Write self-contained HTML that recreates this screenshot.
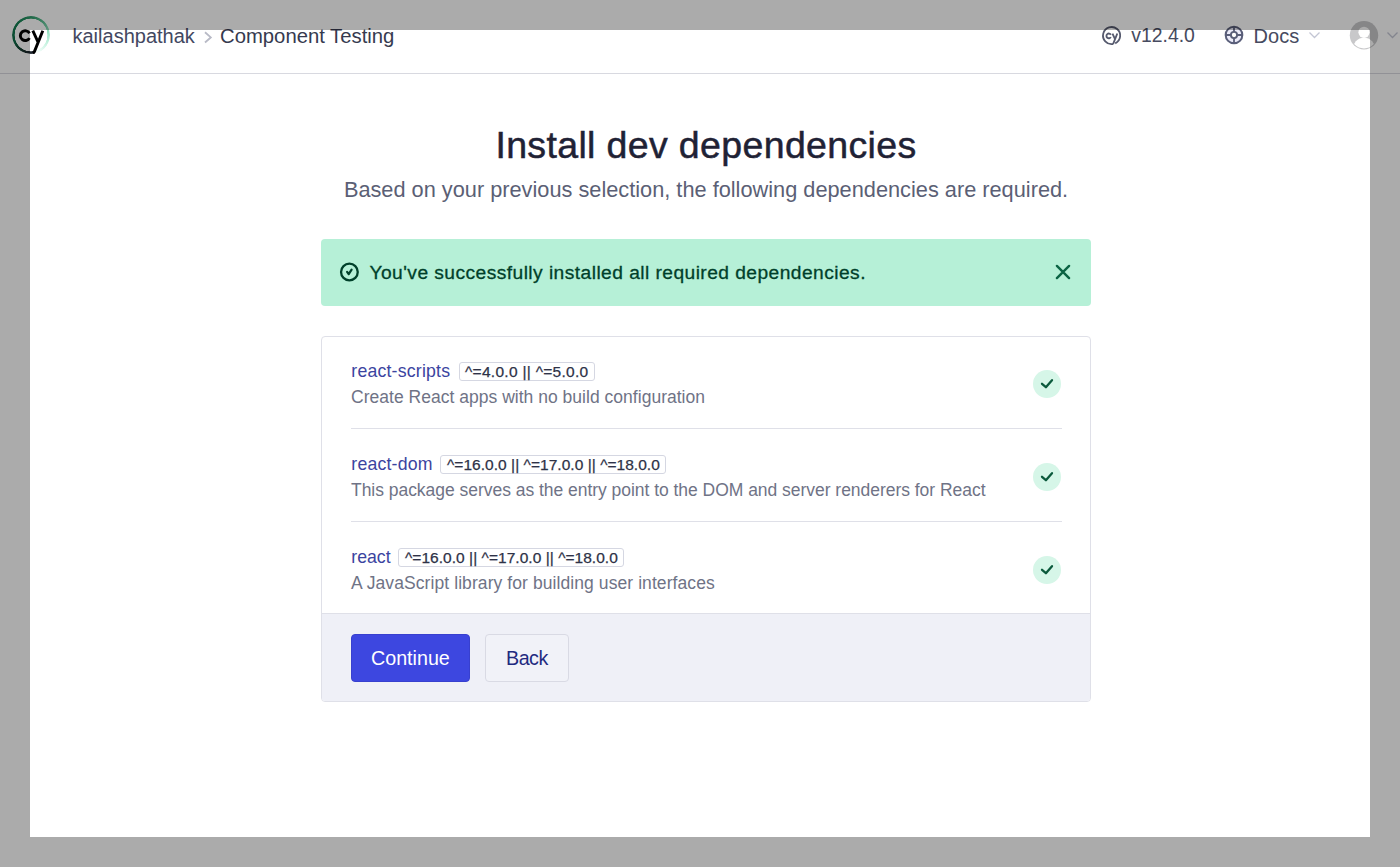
<!DOCTYPE html>
<html><head><meta charset="utf-8">
<style>
*{margin:0;padding:0;box-sizing:border-box}
html,body{width:1400px;height:867px;overflow:hidden;background:#fff;font-family:"Liberation Sans",sans-serif}
.a{position:absolute;white-space:nowrap;line-height:1}
#hdr{position:absolute;left:0;top:0;width:1400px;height:74px;border-bottom:1px solid #d8d9e0;background:#fff}
.ov{position:absolute;background:rgba(0,0,0,0.33)}
</style></head><body>
<div id="hdr"></div>

<!-- header left -->
<div class="a" style="left:12px;top:15.5px;width:38.4px;height:38.4px;border-radius:50%;background:conic-gradient(from 168deg,#1b1e2e 0%,#1b302c 10%,#0f6c48 22%,#178255 40%,#35a070 55%,#6fcda3 68%,#a3e7cb 78%,#d8f7ea 90%,rgba(255,255,255,0) 100%);-webkit-mask:radial-gradient(circle,transparent 16.2px,#000 16.6px,#000 19.2px,transparent 19.6px);mask:radial-gradient(circle,transparent 16.2px,#000 16.6px,#000 19.2px,transparent 19.6px)"></div>
<svg class="a" style="left:7.2px;top:10.7px" width="48" height="48" viewBox="0 0 48 48">
  <path d="M22.49 22.2 A4.9 4.9 0 1 0 22.49 27.1" fill="none" stroke="#000" stroke-width="2.9"/>
  <path d="M25.8 19.7 L31.16 31.3 M35.8 19.7 L27.4 40.6 Q27 41.6 25.6 41.6" fill="none" stroke="#000" stroke-width="2.9" stroke-linejoin="round"/>
</svg>
<div class="a" style="left:72.5px;top:26px;font-size:20px;color:#434861">kailashpathak</div>
<svg class="a" style="left:203px;top:31px" width="10" height="13" viewBox="0 0 10 13"><path d="M2 1.3 L7.8 6.4 L2 11.5" fill="none" stroke="#b8bac6" stroke-width="1.8"/></svg>
<div class="a" style="left:220px;top:26px;font-size:20.3px;color:#363a4f">Component Testing</div>

<!-- header right -->
<svg class="a" style="left:1099.9px;top:24.1px" width="23.2" height="23.2" viewBox="0 0 48 48">
  <path d="M27.08 41.48 A17.75 17.75 0 1 1 31.5 40.09" fill="none" stroke="#565a6e" stroke-width="3.8"/>
  <path d="M22.49 22.2 A4.9 4.9 0 1 0 22.49 27.1" fill="none" stroke="#565a6e" stroke-width="3.8"/>
  <path d="M25.8 19.7 L31.16 31.3 M35.8 19.7 L27.08 41.48" fill="none" stroke="#565a6e" stroke-width="3.8"/>
</svg>
<div class="a" style="left:1131.3px;top:26.4px;font-size:19.4px;color:#474b60">v12.4.0</div>
<svg class="a" style="left:1223.6px;top:25.2px" width="20" height="20" viewBox="0 0 20 20">
  <circle cx="10" cy="10" r="8.35" fill="#ececfa" stroke="#5a5f7a" stroke-width="2"/>
  <circle cx="10" cy="10" r="3.1" fill="#fff" stroke="#5a5f7a" stroke-width="1.9"/>
  <path d="M10 1.7 V7 M10 13 V18.3 M1.7 10 H7 M13 10 H18.3" stroke="#5a5f7a" stroke-width="1.8"/>
</svg>
<div class="a" style="left:1253.6px;top:26.2px;font-size:20px;color:#474b60">Docs</div>
<svg class="a" style="left:1308px;top:31px" width="13" height="8" viewBox="0 0 13 8"><path d="M1.5 1.5 L6.5 6.5 L11.5 1.5" fill="none" stroke="#c3c6d4" stroke-width="1.3"/></svg>
<svg class="a" style="left:1349px;top:20px" width="30" height="30" viewBox="0 0 30 30">
  <clipPath id="cc"><circle cx="15" cy="15.3" r="13.1"/></clipPath>
  <circle cx="15" cy="15.3" r="14.2" fill="#c8c8ca"/>
  <g clip-path="url(#cc)" fill="#fff">
    <circle cx="15" cy="12.3" r="5.6"/>
    <ellipse cx="15" cy="29.5" rx="11.5" ry="11.8"/>
  </g>
</svg>
<svg class="a" style="left:1386px;top:31px" width="14" height="8" viewBox="0 0 14 8"><path d="M1.5 1.5 L6.5 6.5 L11.5 1.5" fill="none" stroke="#c3c6d4" stroke-width="1.3"/></svg>

<!-- title -->
<div class="a" style="left:0;width:1412px;text-align:center;top:127.3px;font-size:37.5px;letter-spacing:0.35px;color:#1f2235;-webkit-text-stroke:0.5px #1f2235">Install dev dependencies</div>
<div class="a" style="left:0;width:1412px;text-align:center;top:179px;font-size:21.75px;color:#5b5f75">Based on your previous selection, the following dependencies are required.</div>

<!-- alert -->
<div class="a" style="left:321px;top:239px;width:770px;height:67px;background:#b6f0d7;border-radius:4px"></div>
<svg class="a" style="left:338px;top:261px" width="22" height="22" viewBox="0 0 22 22">
  <circle cx="11.4" cy="11" r="8.35" fill="none" stroke="#00402a" stroke-width="2.3"/>
  <path d="M9.1 10.9 L10.7 13.2 L13.6 8.7" fill="none" stroke="#00402a" stroke-width="2.2" stroke-linecap="round" stroke-linejoin="round"/>
</svg>
<div class="a" style="left:369.5px;top:263.3px;font-size:19.2px;letter-spacing:0.45px;color:#003f2a;-webkit-text-stroke:0.3px #003f2a">You've successfully installed all required dependencies.</div>
<svg class="a" style="left:1053px;top:262px" width="20" height="20" viewBox="0 0 20 20">
  <path d="M3.9 3.9 L16.1 16.1 M16.1 3.9 L3.9 16.1" stroke="#0b6444" stroke-width="2.4" stroke-linecap="round"/>
</svg>

<!-- card -->
<div class="a" style="left:321px;top:336px;width:770px;height:366px;border:1px solid #dfe0e8;border-radius:4px;overflow:hidden">
  <div class="a" style="left:0;top:276px;width:768px;height:89px;background:#eff0f7;border-top:1px solid #dfe0e8"></div>
  <div class="a" style="left:29px;top:91px;width:711px;height:1px;background:#dfe0e8"></div>
  <div class="a" style="left:29px;top:184px;width:711px;height:1px;background:#dfe0e8"></div>
</div>

<!-- rows -->
<div class="a" style="left:351.3px;top:362.9px;font-size:17.7px;letter-spacing:0.2px;color:#3b449f">react-scripts</div>
<div class="a" style="left:458.5px;top:362px;width:136.5px;height:18.5px;border:1px solid #d5d7e2;border-radius:3px"></div>
<div class="a" style="left:465px;top:364px;font-size:15.5px;letter-spacing:0.29px;color:#2e3247;-webkit-text-stroke:0.25px #2e3247">^=4.0.0 || ^=5.0.0</div>
<div class="a" style="left:351px;top:388.6px;font-size:17.5px;letter-spacing:0.02px;color:#6f7386">Create React apps with no build configuration</div>

<div class="a" style="left:351.3px;top:455.9px;font-size:17.7px;letter-spacing:0.2px;color:#3b449f">react-dom</div>
<div class="a" style="left:440.3px;top:455px;width:226px;height:18.5px;border:1px solid #d5d7e2;border-radius:3px"></div>
<div class="a" style="left:447px;top:457px;font-size:15.5px;letter-spacing:0.04px;color:#2e3247;-webkit-text-stroke:0.25px #2e3247">^=16.0.0 || ^=17.0.0 || ^=18.0.0</div>
<div class="a" style="left:351px;top:481.6px;font-size:17.5px;letter-spacing:-0.033px;color:#6f7386">This package serves as the entry point to the DOM and server renderers for React</div>

<div class="a" style="left:351.3px;top:548.9px;font-size:17.7px;letter-spacing:0px;color:#3b449f">react</div>
<div class="a" style="left:398.3px;top:548px;width:226px;height:18.5px;border:1px solid #d5d7e2;border-radius:3px"></div>
<div class="a" style="left:405px;top:550px;font-size:15.5px;letter-spacing:0.04px;color:#2e3247;-webkit-text-stroke:0.25px #2e3247">^=16.0.0 || ^=17.0.0 || ^=18.0.0</div>
<div class="a" style="left:351px;top:574.6px;font-size:17.5px;letter-spacing:0.08px;color:#6f7386">A JavaScript library for building user interfaces</div>

<!-- check icons -->
<svg class="a" style="left:1032px;top:370px" width="30" height="30" viewBox="0 0 30 30">
  <circle cx="15" cy="14" r="14" fill="#d6f6e8"/>
  <path d="M10 13.8 L13.9 17.2 L20 10.2" fill="none" stroke="#0b5a3c" stroke-width="2.3" stroke-linecap="round" stroke-linejoin="round"/>
</svg>
<svg class="a" style="left:1032px;top:463px" width="30" height="30" viewBox="0 0 30 30">
  <circle cx="15" cy="14" r="14" fill="#d6f6e8"/>
  <path d="M10 13.8 L13.9 17.2 L20 10.2" fill="none" stroke="#0b5a3c" stroke-width="2.3" stroke-linecap="round" stroke-linejoin="round"/>
</svg>
<svg class="a" style="left:1032px;top:556px" width="30" height="30" viewBox="0 0 30 30">
  <circle cx="15" cy="14" r="14" fill="#d6f6e8"/>
  <path d="M10 13.8 L13.9 17.2 L20 10.2" fill="none" stroke="#0b5a3c" stroke-width="2.3" stroke-linecap="round" stroke-linejoin="round"/>
</svg>

<!-- buttons -->
<div class="a" style="left:351px;top:634px;width:119px;height:48px;background:#3d47e0;border:1px solid #3840cf;border-radius:4px"></div>
<div class="a" style="left:371px;top:649.3px;font-size:19.7px;color:#fff">Continue</div>
<div class="a" style="left:485px;top:634px;width:84px;height:48px;border:1px solid #d9dae4;border-radius:4px;background:#f1f2f8"></div>
<div class="a" style="left:506px;top:649.3px;font-size:19.7px;letter-spacing:-0.5px;color:#1f2a80">Back</div>

<!-- overlay -->
<div class="ov" style="left:0;top:0;width:1400px;height:30px"></div>
<div class="ov" style="left:0;top:30px;width:30px;height:837px"></div>
<div class="ov" style="left:1370px;top:30px;width:30px;height:837px"></div>
<div class="ov" style="left:30px;top:837px;width:1340px;height:30px"></div>
</body></html>
